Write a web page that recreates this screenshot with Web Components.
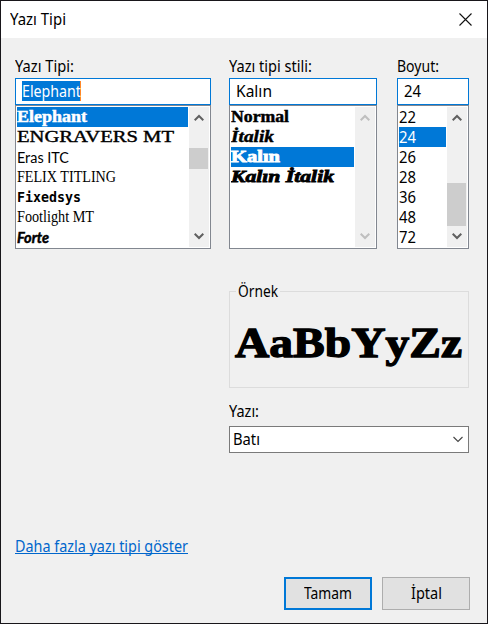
<!DOCTYPE html>
<html lang="tr">
<head>
<meta charset="utf-8">
<title>Yazı Tipi</title>
<style>
html,body{margin:0;height:100%;overflow:hidden}
body{font:16px/20px "Noto Sans","Open Sans",sans-serif;color:#000}
</style>
</head>
<body>
<font-dialog></font-dialog>
<script>
const define = (name, html, setup) => customElements.define(name, class extends HTMLElement {
  connectedCallback() {
    if (this.shadowRoot) return;
    const root = this.attachShadow({mode: 'open'});
    root.innerHTML = '<style>:host,*{box-sizing:border-box}</style>' + html;
    if (setup) setup(this, root);
  }
});

// A line of text condensed or widened to its "w" attribute, in pixels.
define('fit-text', `<style>
  :host{display:block;height:20px;line-height:20px;white-space:nowrap}
  span{display:inline-block;transform-origin:0 50%;vertical-align:top}
</style><span><slot></slot></span>`, (el, root) => {
  const span = root.querySelector('span'), w = +el.getAttribute('w');
  el.style.width = w + 'px';
  const natural = span.getBoundingClientRect().width;
  if (natural) span.style.transform = `scaleX(${w / natural})`;
});

define('title-bar', `<style>
  :host{display:flex;justify-content:space-between;height:37px;background:#fff;padding:8px 15px 0 9px}
  svg{margin-top:4px;display:block}
</style><slot></slot>
<svg width="13" height="13" viewBox="0 0 13 13"><path d="M.5 .5 12.5 12.5M12.5 .5 .5 12.5" stroke="#111" stroke-width="1.1" fill="none"/></svg>`);

define('edit-box', `<style>
  :host{display:block;height:27px;background:#fff;border:1px solid #0078d7;padding:2px 6px}
</style><slot></slot>`);

define('scroll-bar', `<style>
  :host{display:flex;flex-direction:column;justify-content:space-between;width:20px;height:140px;background:#f0f0f0;color:#606060;position:relative}
  :host([disabled]){color:#bfbfbf}
  svg{display:block;margin:7px 0 0 5px}
  .down{margin:0 0 7px 5px}
  i{position:absolute;left:0;width:19px;background:#cdcdcd}
</style>
<svg width="10" height="8" viewBox="0 0 10 8"><path d="M.7 6.3 5 2 9.3 6.3" fill="none" stroke="currentColor" stroke-width="2"/></svg>
<svg class="down" width="10" height="8" viewBox="0 0 10 8"><path d="M.7 1.7 5 6 9.3 1.7" fill="none" stroke="currentColor" stroke-width="2"/></svg>`, (el, root) => {
  if (!el.hasAttribute('thumb')) return;
  const [top, height] = el.getAttribute('thumb').split(' ');
  const thumb = document.createElement('i');
  thumb.style.top = top + 'px';
  thumb.style.height = height + 'px';
  root.append(thumb);
});

define('list-box', `<style>
  :host{display:flex;height:144px;background:#fff;border:1px solid #828790;padding:1px;gap:1px}
  .items{flex:1;overflow:hidden}
</style><div class="items"><slot></slot></div><slot name="bar"></slot>`);

define('list-item', `<style>
  :host{display:block;height:20px;overflow:hidden}
  :host([selected]){background:#0078d7;color:#fff}
</style><slot></slot>`);

define('group-box', `<style>
  :host{display:block;height:97px;border:1px solid #dcdcdc;padding:0 5px}
  .legend{width:44px;height:20px;margin:-11px 0 0 1px;padding-left:2px;background:#f0f0f0}
  .sample{padding-top:14px}
</style><div class="legend"><slot name="legend"></slot></div><div class="sample"><slot></slot></div>`);

define('combo-box', `<style>
  :host{display:flex;justify-content:space-between;height:27px;border:1px solid #7a7a7a;background:#fff;padding:2px 5px 0 3px}
  svg{margin-top:7px}
</style><slot></slot>
<svg width="10" height="7" viewBox="0 0 10 7"><path d="M.5 1 5 5.5 9.5 1" fill="none" stroke="#444" stroke-width="1.1"/></svg>`);

define('push-button', `<style>
  :host{display:flex;align-items:flex-start;justify-content:center;width:88px;height:33px;background:#e1e1e1;border:1px solid #adadad;padding-top:5px}
  :host([default]){border:2px solid #0078d7;padding-top:4px}
</style><slot></slot>`);

define('font-dialog', `<style>
  :host{display:block;width:488px;height:624px;background:#f0f0f0;border:1px solid #18161a}
  .pickers{display:grid;grid-template-columns:196px 18px 148px 20px 72px;padding:18px 14px 0}
  .family{grid-column:1}.style{grid-column:3}.size{grid-column:5}
  .label{height:22px}
  .right{margin:42px 0 0 228px;width:240px}
  .script{margin:13px 0 5px}
  .sel{background:#0078d7;color:#fff;width:59px;border-right:1px solid #ff8728}
  .link{display:flex;margin:84px 0 0 14px;width:173px;height:17px;color:#0066cc;border-bottom:1px solid #0066cc;cursor:pointer}
  .link fit-text{margin-top:-1px}
  .buttons{display:flex;justify-content:flex-end;gap:10px;margin:23px 17px 0 0}
  .elephant{font:bold 16px/20px "Liberation Serif",serif;-webkit-text-stroke:.45px currentColor}
  .it{font-style:italic}
  .kalin{-webkit-text-stroke-width:.8px}
  .engravers{font:16px/20px "Liberation Serif",serif;-webkit-text-stroke:.4px #000}
  .eras{font:15.5px/20px Lato,sans-serif}
  .felix{font:17px/20px "Liberation Serif",serif}
  .fixed{font:bold 14px/20px "DejaVu Sans Mono",monospace}
  .foot{font:16px/20px "Liberation Serif",serif}
  .forte{font:italic bold 15px/20px Lato,sans-serif;-webkit-text-stroke:.5px #000}
  .big{font:bold 43px/56px "Liberation Serif",serif;height:56px;line-height:56px;-webkit-text-stroke:1.3px #000}
</style>
<title-bar><fit-text w="56">Yazı Tipi</fit-text></title-bar>
<div class="pickers">
  <div class="family">
    <div class="label"><fit-text w="59">Yazı Tipi:</fit-text></div>
    <edit-box><div class="sel"><fit-text w="59">Elephant</fit-text></div></edit-box>
    <list-box>
      <list-item selected><fit-text class="elephant" w="70">Elephant</fit-text></list-item>
      <list-item><fit-text class="engravers" w="157">ENGRAVERS MT</fit-text></list-item>
      <list-item><fit-text class="eras" w="52">Eras ITC</fit-text></list-item>
      <list-item><fit-text class="felix" w="99">FELIX TITLING</fit-text></list-item>
      <list-item><fit-text class="fixed" w="64">Fixedsys</fit-text></list-item>
      <list-item><fit-text class="foot" w="77">Footlight MT</fit-text></list-item>
      <list-item><fit-text class="forte" w="32">Forte</fit-text></list-item>
      <scroll-bar slot="bar" thumb="41 21"></scroll-bar>
    </list-box>
  </div>
  <div class="style">
    <div class="label"><fit-text w="83">Yazı tipi stili:</fit-text></div>
    <edit-box><fit-text w="36">Kalın</fit-text></edit-box>
    <list-box>
      <list-item><fit-text class="elephant" w="58">Normal</fit-text></list-item>
      <list-item><fit-text class="elephant it" w="43">İtalik</fit-text></list-item>
      <list-item selected><fit-text class="elephant kalin" w="49">Kalın</fit-text></list-item>
      <list-item><fit-text class="elephant it kalin" w="103">Kalın İtalik</fit-text></list-item>
      <scroll-bar slot="bar" disabled></scroll-bar>
    </list-box>
  </div>
  <div class="size">
    <div class="label"><fit-text w="42">Boyut:</fit-text></div>
    <edit-box><fit-text w="17">24</fit-text></edit-box>
    <list-box>
      <list-item><fit-text w="17">22</fit-text></list-item>
      <list-item selected><fit-text w="17">24</fit-text></list-item>
      <list-item><fit-text w="17">26</fit-text></list-item>
      <list-item><fit-text w="17">28</fit-text></list-item>
      <list-item><fit-text w="17">36</fit-text></list-item>
      <list-item><fit-text w="17">48</fit-text></list-item>
      <list-item><fit-text w="17">72</fit-text></list-item>
      <scroll-bar slot="bar" thumb="76 43"></scroll-bar>
    </list-box>
  </div>
</div>
<div class="right">
  <group-box><fit-text slot="legend" w="40">Örnek</fit-text><fit-text class="big" w="227">AaBbYyZz</fit-text></group-box>
  <div class="script"><fit-text w="30">Yazı:</fit-text></div>
  <combo-box><fit-text w="27">Batı</fit-text></combo-box>
</div>
<div class="link"><fit-text w="173">Daha fazla yazı tipi göster</fit-text></div>
<div class="buttons">
  <push-button default><fit-text w="48">Tamam</fit-text></push-button>
  <push-button><fit-text w="31">İptal</fit-text></push-button>
</div>`);
</script>
</body>
</html>
